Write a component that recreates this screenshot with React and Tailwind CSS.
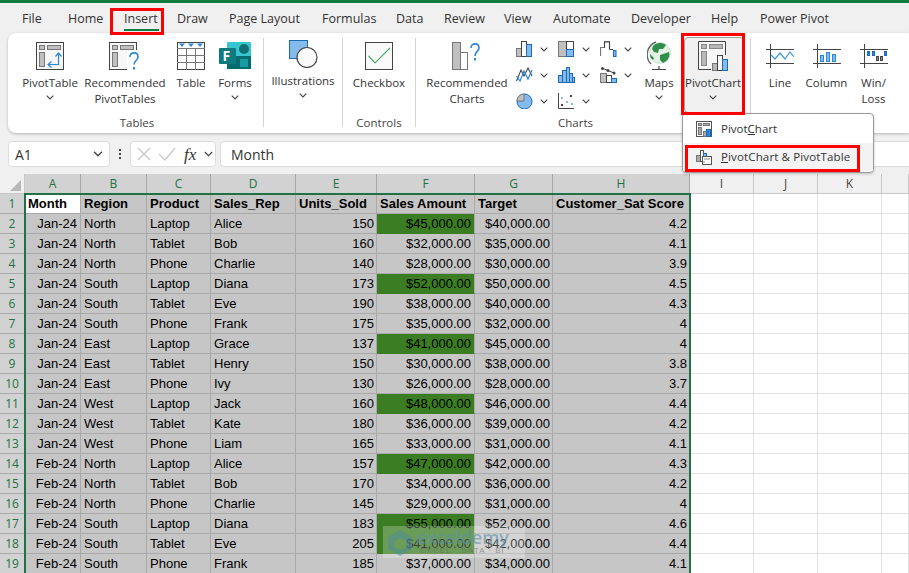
import React from "react"

const uiFont = "font-['Open_Sans','Noto_Sans',sans-serif]"

const tabs = [
  { label: "File", cls: "w-[46px]" },
  { label: "Home", cls: "w-[56px]" },
  { label: "Insert", cls: "w-[53px]" },
  { label: "Draw", cls: "w-[52px]" },
  { label: "Page Layout", cls: "w-[93px]" },
  { label: "Formulas", cls: "w-[74px]" },
  { label: "Data", cls: "w-[48px]" },
  { label: "Review", cls: "w-[60px]" },
  { label: "View", cls: "w-[49px]" },
  { label: "Automate", cls: "w-[78px]" },
  { label: "Developer", cls: "w-[80px]" },
  { label: "Help", cls: "w-[49px]" },
  { label: "Power Pivot", cls: "w-[100px]" },
]

const rows = [
  ["Jan-24", "North", "Laptop", "Alice", 150, "$45,000.00", "$40,000.00", "4.2", true],
  ["Jan-24", "North", "Tablet", "Bob", 160, "$32,000.00", "$35,000.00", "4.1"],
  ["Jan-24", "North", "Phone", "Charlie", 140, "$28,000.00", "$30,000.00", "3.9"],
  ["Jan-24", "South", "Laptop", "Diana", 173, "$52,000.00", "$50,000.00", "4.5", true],
  ["Jan-24", "South", "Tablet", "Eve", 190, "$38,000.00", "$40,000.00", "4.3"],
  ["Jan-24", "South", "Phone", "Frank", 175, "$35,000.00", "$32,000.00", "4"],
  ["Jan-24", "East", "Laptop", "Grace", 137, "$41,000.00", "$45,000.00", "4", true],
  ["Jan-24", "East", "Tablet", "Henry", 150, "$30,000.00", "$38,000.00", "3.8"],
  ["Jan-24", "East", "Phone", "Ivy", 130, "$26,000.00", "$28,000.00", "3.7"],
  ["Jan-24", "West", "Laptop", "Jack", 160, "$48,000.00", "$46,000.00", "4.4", true],
  ["Jan-24", "West", "Tablet", "Kate", 180, "$36,000.00", "$39,000.00", "4.2"],
  ["Jan-24", "West", "Phone", "Liam", 165, "$33,000.00", "$31,000.00", "4.1"],
  ["Feb-24", "North", "Laptop", "Alice", 157, "$47,000.00", "$42,000.00", "4.3", true],
  ["Feb-24", "North", "Tablet", "Bob", 170, "$34,000.00", "$36,000.00", "4.2"],
  ["Feb-24", "North", "Phone", "Charlie", 145, "$29,000.00", "$31,000.00", "4"],
  ["Feb-24", "South", "Laptop", "Diana", 183, "$55,000.00", "$52,000.00", "4.6", true],
  ["Feb-24", "South", "Tablet", "Eve", 205, "$41,000.00", "$42,000.00", "4.4", true],
  ["Feb-24", "South", "Phone", "Frank", 185, "$37,000.00", "$34,000.00", "4.1"],
]

const headers = ["Month", "Region", "Product", "Sales_Rep", "Units_Sold", "Sales Amount", "Target", "Customer_Sat Score"]
const cols = ["A", "B", "C", "D", "E", "F", "G", "H"]
const colWidths = ["w-[25px]", "w-[56px]", "w-[66px]", "w-[64px]", "w-[85px]", "w-[81px]", "w-[98px]", "w-[78px]", "w-[137px]", "w-[64px]", "w-[64px]", "w-[64px]", "w-[27px]"]

const Chevron = ({ className = "", w = 8, h = 5 }) => (
  <svg width={w} height={h} viewBox="0 0 8 5" className={`shrink-0 ${className}`}>
    <path d="M0.7 0.7 L4 4 L7.3 0.7" fill="none" stroke="#444" strokeWidth="1.1" />
  </svg>
)

const Icon = ({ w = 28, h = 28, children }) => (
  <svg width={w} height={h} viewBox={`0 0 ${w} ${h}`} className="block shrink-0">
    {children}
  </svg>
)

const Pivot = () => (
  <>
    <rect x="0.5" y="0.5" width="27" height="27" fill="#f7f7f7" stroke="#444" />
    <rect x="3.5" y="3.5" width="5" height="4" fill="#c0c0c0" stroke="#777" />
    <rect x="11.5" y="3.5" width="13" height="4" fill="#c0c0c0" stroke="#777" />
    <rect x="3.5" y="10.5" width="5" height="14" fill="#c0c0c0" stroke="#777" />
  </>
)

const PivotTableIcon = () => (
  <Icon>
    <Pivot />
    <path d="M12.5 22.5 H22.5 V12 M19.5 14.5 L22.5 11 L25.5 14.5 M15.5 19.5 L12 22.5 L15.5 25.5" fill="none" stroke="#2b88d8" strokeWidth="1.2" />
  </Icon>
)

const RecommendedPivotIcon = () => (
  <Icon w={32}>
    <Pivot />
    <rect x="18" y="8" width="14" height="20" fill="#fff" />
    <path d="M21 15 C21 9.5 29 9.5 29 15 C29 18.5 25 18.5 25 22.5" fill="none" stroke="#2b88d8" strokeWidth="1.6" />
    <rect x="24" y="25" width="2" height="2.5" fill="#2b88d8" />
  </Icon>
)

const TableIcon = () => (
  <Icon>
    <rect x="0.5" y="0.5" width="27" height="27" fill="#fff" stroke="#444" />
    <path d="M0 6.5 H28 M0 13.5 H28 M0 20.5 H28 M9.5 6 V28 M18.5 6 V28" stroke="#777" />
    <path d="M2 1.5 H8 L5 5 Z M11 1.5 H17 L14 5 Z M20 1.5 H26 L23 5 Z" fill="#2b88d8" />
  </Icon>
)

const FormsIcon = () => (
  <Icon w={32}>
    <rect x="8" y="0" width="24" height="27" rx="1" fill="#37c6d0" />
    <circle cx="25" cy="7" r="5" fill="#0f6f75" />
    <rect x="8" y="14" width="24" height="13" fill="#036c70" />
    <rect x="21" y="17" width="8" height="8" fill="#1a9ba1" />
    <rect x="0" y="6" width="17" height="16" rx="1" fill="#0e7a80" />
    <text x="3.5" y="19" fontSize="14" fontWeight="700" fill="#fff" fontFamily="'Open Sans',sans-serif">F</text>
  </Icon>
)

const IllustrationsIcon = () => (
  <Icon w={30}>
    <rect x="1.5" y="0.5" width="18" height="18" fill="#85bbec" stroke="#1a6ab8" />
    <circle cx="19" cy="17.5" r="10" fill="#f9f9f9" stroke="#444" strokeWidth="1.2" />
  </Icon>
)

const CheckboxIcon = () => (
  <Icon>
    <rect x="0.5" y="0.5" width="27" height="27" fill="#f9f9f9" stroke="#444" />
    <path d="M3.5 14 L10 21 L25 6" fill="none" stroke="#4fae6a" strokeWidth="1.2" />
  </Icon>
)

const RecommendedChartsIcon = () => (
  <Icon w={30}>
    <rect x="0.5" y="0.5" width="8" height="27" fill="#c0c0c0" stroke="#777" />
    <rect x="8.5" y="10.5" width="7" height="17" fill="#fff" stroke="#777" />
    <path d="M19 6 C19 0.5 27 0.5 27 6 C27 9.5 23 9.5 23 14" fill="none" stroke="#2b88d8" strokeWidth="1.6" />
    <rect x="22" y="16" width="2" height="2.5" fill="#2b88d8" />
  </Icon>
)

const smallCharts = [
  <>
    <rect x="0.5" y="7.5" width="5" height="8" fill="#c0c0c0" stroke="#777" />
    <rect x="5.5" y="0.5" width="5" height="15" fill="#fff" stroke="#444" />
    <rect x="10.5" y="3.5" width="5" height="12" fill="#85bbec" stroke="#1a6ab8" />
  </>,
  <>
    <rect x="0.5" y="0.5" width="8" height="15" fill="#c0c0c0" stroke="#777" />
    <rect x="8.5" y="0.5" width="7" height="8" fill="#fff" stroke="#444" />
    <rect x="8.5" y="8.5" width="7" height="7" fill="#85bbec" stroke="#1a6ab8" />
  </>,
  <>
    <path d="M0.5 15 V6.5 H4.5 V0.5 H9.5 V8" fill="none" stroke="#777" strokeWidth="1.2" />
    <path d="M4.5 7 V1 H9.5 V8.5 H13" fill="none" stroke="#444" />
    <rect x="13.5" y="9.5" width="2.5" height="6" fill="#85bbec" stroke="#1a6ab8" />
  </>,
  <>
    <path d="M0.5 14 L5 3 L8 9 L12 1 L16 9" fill="none" stroke="#444" strokeWidth="1.1" />
    <path d="M0.5 9 L4 14 L8 4 L12 12 L16 3" fill="none" stroke="#2b88d8" strokeWidth="1.2" />
  </>,
  <>
    <rect x="0.5" y="8.5" width="4" height="7" fill="#85bbec" stroke="#1a6ab8" />
    <rect x="4.5" y="3.5" width="4" height="12" fill="#85bbec" stroke="#1a6ab8" />
    <rect x="8.5" y="0.5" width="3" height="15" fill="#85bbec" stroke="#1a6ab8" />
    <rect x="11.5" y="6.5" width="3" height="9" fill="#85bbec" stroke="#1a6ab8" />
    <rect x="14.5" y="10.5" width="2" height="5" fill="#85bbec" stroke="#1a6ab8" />
  </>,
  <>
    <rect x="0.5" y="6.5" width="6" height="9" fill="#c0c0c0" stroke="#777" />
    <rect x="6.5" y="8.5" width="5" height="7" fill="#fff" stroke="#444" />
    <rect x="11.5" y="11.5" width="5" height="4" fill="#85bbec" stroke="#1a6ab8" />
    <path d="M2 1 L14 6" stroke="#444" />
    <circle cx="2.5" cy="1.5" r="1.5" fill="#444" />
    <circle cx="8" cy="3.5" r="1.5" fill="#444" />
    <circle cx="14" cy="6" r="1.5" fill="#444" />
  </>,
  <>
    <circle cx="8.5" cy="8.5" r="7.5" fill="#85bbec" stroke="#1a6ab8" />
    <path d="M8 1 V8 H1 C1 4 4 1 8 1 Z" fill="#c0c0c0" stroke="#777" />
  </>,
  <>
    <path d="M0.5 0 V15.5 H16" fill="none" stroke="#444" />
    <rect x="3" y="4" width="2" height="2" fill="#85bbec" />
    <rect x="3" y="11" width="2" height="2" fill="#444" />
    <rect x="8" y="8" width="2" height="2" fill="#85bbec" />
    <rect x="12" y="2" width="2" height="2" fill="#444" />
    <rect x="13" y="10" width="2" height="2" fill="#85bbec" />
  </>,
]

const MapsIcon = () => (
  <Icon w={24} h={30}>
    <path d="M9 1 A13.5 13.5 0 0 0 4 23" fill="none" stroke="#666" strokeWidth="1.4" />
    <circle cx="13" cy="12" r="10.5" fill="#e6f1e6" stroke="#bcd8c4" strokeWidth="0.6" />
    <path d="M6 5 C9 1.5 15 1 19 4 L16 8 L12 8 L11 12 L7 11 L5 8 Z M13 14 L22 11 C23.5 15 21 20 16 22 L13 19 Z M3 13 L7 17 L6 19 C4 18 3 16 3 13 Z" fill="#2f8f4a" />
    <path d="M12 25 V28 M5 28.5 H19" stroke="#444" strokeWidth="1.2" />
  </Icon>
)

const PivotChartIcon = () => (
  <Icon w={30} h={30}>
    <path d="M13 28.5 H0.5 V0.5 H27.5 V14" fill="#f7f7f7" stroke="#444" />
    <rect x="3.5" y="3.5" width="5" height="4" fill="#b8b8b8" stroke="#888" />
    <rect x="11.5" y="3.5" width="13" height="4" fill="#b8b8b8" stroke="#888" />
    <rect x="3.5" y="10.5" width="5" height="14" fill="#b8b8b8" stroke="#888" />
    <rect x="14.5" y="22.5" width="5" height="7" fill="#b8b8b8" stroke="#777" />
    <rect x="19.5" y="14.5" width="5" height="15" fill="#f7f7f7" stroke="#444" />
    <rect x="24.5" y="18.5" width="5" height="11" fill="#85bbec" stroke="#1a6ab8" />
  </Icon>
)

const LineIcon = () => (
  <Icon h={24}>
    <path d="M0 5.5 H28 M0 19.5 H28 M4.5 0 V24" stroke="#444" />
    <path d="M5 11 L9 15 L14 9 L19 15 L24 8 L28 13" fill="none" stroke="#3b9be0" strokeWidth="1.2" />
  </Icon>
)

const ColumnIcon = () => (
  <Icon h={24}>
    <path d="M0 5.5 H28 M0 19.5 H28 M4.5 0 V24" stroke="#444" />
    <rect x="7.5" y="11.5" width="3" height="6" fill="#85bbec" stroke="#2b88d8" />
    <rect x="13.5" y="8.5" width="3" height="9" fill="#85bbec" stroke="#2b88d8" />
    <rect x="19.5" y="10.5" width="3" height="7" fill="#85bbec" stroke="#2b88d8" />
  </Icon>
)

const WinLossIcon = () => (
  <Icon h={24}>
    <path d="M0 5.5 H28 M0 19.5 H28 M4.5 0 V24" stroke="#444" />
    <rect x="7.5" y="7.5" width="2" height="4" fill="#2b88d8" stroke="#1a6ab8" />
    <rect x="12.5" y="7.5" width="2" height="4" fill="#2b88d8" stroke="#1a6ab8" />
    <rect x="16.5" y="12.5" width="2" height="4" fill="#888" stroke="#444" />
    <rect x="20.5" y="12.5" width="2" height="4" fill="#888" stroke="#444" />
    <rect x="24.5" y="7.5" width="2" height="4" fill="#2b88d8" stroke="#1a6ab8" />
  </Icon>
)

const MenuPivotChartIcon = () => (
  <Icon w={16} h={16}>
    <rect x="0.5" y="0.5" width="15" height="15" fill="#fff" stroke="#555" />
    <rect x="2.5" y="2.5" width="3" height="2" fill="#aaa" stroke="#777" />
    <rect x="7.5" y="2.5" width="6" height="2" fill="#aaa" stroke="#777" />
    <rect x="2.5" y="6.5" width="3" height="7" fill="#aaa" stroke="#777" />
    <rect x="7.5" y="10.5" width="3" height="5" fill="#aaa" stroke="#777" />
    <rect x="10.5" y="8.5" width="4" height="7" fill="#2b88d8" stroke="#1a6ab8" />
  </Icon>
)

const MenuBothIcon = () => (
  <Icon w={16} h={16}>
    <rect x="0.5" y="6.5" width="4" height="6" fill="#aaa" stroke="#777" />
    <rect x="4.5" y="1.5" width="3" height="11" fill="#fff" stroke="#555" />
    <rect x="7.5" y="4.5" width="3" height="3" fill="#85bbec" stroke="#1a6ab8" />
    <rect x="6.5" y="7.5" width="9" height="8" fill="#fff" stroke="#555" />
    <path d="M8 10 H14 M8 12 V14" stroke="#888" />
  </Icon>
)

const RibbonButton = ({ icon, label, sub, chevron, className = "" }) => (
  <div className={`flex flex-col items-center pt-[9px] shrink-0 ${className}`}>
    <div className="h-[28px] flex items-center justify-center">{icon}</div>
    <div className="mt-[5px] text-center whitespace-nowrap leading-[16px]">{label}</div>
    {sub && <div className="text-center whitespace-nowrap leading-[16px]">{sub}</div>}
    {chevron && <Chevron className="mt-[4px]" />}
  </div>
)

const Group = ({ label, className = "", labelCls = "", children }) => (
  <div className={`flex flex-col shrink-0 h-full ${className}`}>
    <div className="flex h-[82px]">{children}</div>
    <div className={`text-center leading-[16px] text-[#444] ${labelCls}`}>{label}</div>
  </div>
)

const Divider = () => <div className="w-px h-[89px] mt-[5px] bg-[#d4d4d4] shrink-0" />

const Ribbon = () => (
  <div className="relative ml-2 h-[100px] flex bg-white rounded-l-lg shadow-[0_1px_3px_rgba(0,0,0,0.25)] text-[11.5px] text-[#333]">
    <Group label="Tables" className="w-[255px]" labelCls="pl-[3px]">
      <RibbonButton icon={<PivotTableIcon />} label="PivotTable" chevron className="w-[70px] ml-[7px]" />
      <RibbonButton icon={<RecommendedPivotIcon />} label="Recommended" sub="PivotTables" className="w-[80px]" />
      <RibbonButton icon={<TableIcon />} label="Table" className="w-[52px]" />
      <RibbonButton icon={<FormsIcon />} label="Forms" chevron className="w-[36px]" />
    </Group>
    <Divider />
    <Group label="" className="w-[78px]">
      <RibbonButton icon={<IllustrationsIcon />} label="Illustrations" chevron className="w-[78px] !pt-[7px]" />
    </Group>
    <Divider />
    <Group label="Controls" className="w-[72px]">
      <RibbonButton icon={<CheckboxIcon />} label="Checkbox" className="w-[72px]" />
    </Group>
    <Divider />
    <Group label="Charts" className="w-[334px]" labelCls="pr-[15px]">
      <RibbonButton icon={<RecommendedChartsIcon />} label="Recommended" sub="Charts" className="w-[82px] ml-[10px]" />
      <div className="grid grid-cols-3 auto-rows-[26px] w-[126px] ml-[8px] pt-[3px]">
        {smallCharts.map((c, i) => (
          <div key={i} className="flex items-center gap-[6px]">
            <Icon w={18} h={16}>{c}</Icon>
            <Chevron />
          </div>
        ))}
      </div>
      <RibbonButton icon={<MapsIcon />} label="Maps" chevron className="w-[34px]" />
      <div className="ml-[8px] mt-[4px] h-[76px] w-[60px]">
        <RibbonButton icon={<PivotChartIcon />} label="PivotChart" chevron className="w-[60px] h-[76px] !pt-[4px] pr-[2px] bg-[#f0f0f0] border border-[#a0a0a0] rounded" />
      </div>
    </Group>
    <Divider />
    <div className="flex pl-[6px]">
      <RibbonButton icon={<LineIcon />} label="Line" className="w-[46px]" />
      <RibbonButton icon={<ColumnIcon />} label="Column" className="w-[47px]" />
      <RibbonButton icon={<WinLossIcon />} label="Win/" sub="Loss" className="w-[47px]" />
    </div>
  </div>
)

const FormulaBar = () => (
  <div className="flex items-center h-[26px] mt-2 ml-2 text-[14px] text-[#333]">
    <div className="flex items-center justify-between w-[102px] h-full pl-[6px] pr-[6px] bg-white border border-[#dcdcdc] rounded">
      <span>A1</span>
      <Chevron w={10} h={6} />
    </div>
    <div className="w-[20px] flex flex-col items-center gap-[2px]">
      <span className="w-[2px] h-[2px] bg-[#444]" />
      <span className="w-[2px] h-[2px] bg-[#444]" />
      <span className="w-[2px] h-[2px] bg-[#444]" />
    </div>
    <div className="flex items-center w-[86px] h-full pl-[6px] bg-white border border-[#dcdcdc] rounded">
      <svg width="40" height="14" viewBox="0 0 40 14" className="shrink-0">
        <path d="M1 1 L13 13 M13 1 L1 13" stroke="#c8c8c8" strokeWidth="1.3" />
        <path d="M22 7 L28 13 L38 1" fill="none" stroke="#c8c8c8" strokeWidth="1.3" />
      </svg>
      <span className="ml-[7px] font-['Liberation_Serif',serif] italic text-[17px] leading-none text-[#333]">fx</span>
      <Chevron w={9} h={6} className="ml-[8px]" />
    </div>
    <div className="flex-1 h-full ml-1 flex items-center pl-[10px] bg-white border-y border-l border-[#dcdcdc] rounded-l">Month</div>
  </div>
)

const Sheet = () => {
  const cellBase = "h-[20px] p-0 border-r border-b border-[#a9a9a9] bg-[#c6c6c6] text-black font-normal text-left whitespace-nowrap overflow-hidden"
  const blank = "h-[20px] p-0 border-r border-b border-[#e1e1e1] bg-white"
  const rowHead = "h-[20px] p-0 border-r border-b border-[#a9a9a9] bg-[#d2d2d2] text-[#217346] text-[12px] font-normal text-center " + uiFont
  return (
    <div className="relative mt-[7px] font-['Liberation_Sans',Arial,sans-serif] text-[13px] leading-[18px]">
      <table className="table-fixed w-[909px] border-separate border-spacing-0">
        <colgroup>
          {colWidths.map((c, i) => <col key={i} className={c} />)}
        </colgroup>
        <thead>
          <tr>
            <th className="h-[20px] p-0 bg-[#f0f0f0] border-r border-b border-[#c8c8c8]">
              <div className="ml-auto mr-[3px] mt-[3px] w-0 h-0 border-l-[11px] border-l-transparent border-b-[11px] border-b-[#b8b8b8]" />
            </th>
            {cols.map(c => (
              <th key={c} className={`h-[20px] p-0 bg-[#d2d2d2] border-r border-b border-[#a9a9a9] text-[#217346] text-[12px] font-normal ${uiFont}`}>{c}</th>
            ))}
            {["I", "J", "K", ""].map(c => (
              <th key={c} className={`h-[20px] p-0 bg-[#f0f0f0] border-r border-b border-[#c8c8c8] text-[#444] text-[12px] font-normal ${uiFont}`}>{c}</th>
            ))}
          </tr>
        </thead>
        <tbody>
          <tr>
            <td className={rowHead}>1</td>
            {headers.map((h, i) => (
              <td key={h} className={`${cellBase} !font-bold pl-[3px] ${i === 0 ? "!bg-white" : ""}`}>{h}</td>
            ))}
            <td className={blank} /><td className={blank} /><td className={blank} /><td className={blank} />
          </tr>
          {rows.map((r, i) => (
            <tr key={i}>
              <td className={rowHead}>{i + 2}</td>
              <td className={`${cellBase} !text-right pr-[3px]`}>{r[0]}</td>
              <td className={`${cellBase} pl-[3px]`}>{r[1]}</td>
              <td className={`${cellBase} pl-[3px]`}>{r[2]}</td>
              <td className={`${cellBase} pl-[3px]`}>{r[3]}</td>
              <td className={`${cellBase} !text-right pr-[2px]`}>{r[4]}</td>
              <td className={`${cellBase} !text-right pr-[3px] ${r[8] ? "!bg-[#3a7d22] !border-b-[#3a7d22]" : ""}`}>{r[5]}</td>
              <td className={`${cellBase} !text-right pr-[2px]`}>{r[6]}</td>
              <td className={`${cellBase} !text-right pr-[2px]`}>{r[7]}</td>
              <td className={blank} /><td className={blank} /><td className={blank} /><td className={blank} />
            </tr>
          ))}
        </tbody>
      </table>
      {/* selection outline over A1:H */}
      <div className="absolute left-[24px] top-[19px] w-[667px] h-[400px] border-2 border-[#1f7246] pointer-events-none" />
      {/* watermark */}
      <div className="absolute left-[383px] top-[352px] w-[142px] h-[32px] bg-white/25 flex items-center pl-[2px]">
        <svg width="30" height="30" viewBox="0 0 30 30" className="shrink-0 opacity-50">
          <path d="M15 3 L27 10 V22 L15 29 L3 22 V10 Z M15 11 L9 14 V20 L15 23 L21 20 V14 Z" fill="#4d8c9c" fillRule="evenodd" />
        </svg>
        <div className="ml-[1px] text-center whitespace-nowrap">
          <div className="font-['Open_Sans',sans-serif] text-[18px] leading-[18px] font-semibold text-[#5d8fa8]/60">exceldemy</div>
          <div className="text-[8px] leading-[10px] tracking-[1px] text-[#666]/60">EXCEL · DATA · BI</div>
        </div>
      </div>
    </div>
  )
}

const App = () => {
  return (
    <div className={`relative w-[909px] h-[573px] overflow-hidden bg-[#f0f0f0] ${uiFont}`}>
      <div className="h-[3px] bg-[#107c41]" />
      <div className="flex items-center h-[30px] pl-[22px] pt-[2px] text-[12.5px] text-[#333]">
        {tabs.map(t => (
          <div key={t.label} className={`${t.cls} relative shrink-0 whitespace-nowrap leading-[28px]`}>
            {t.label}
            {t.label === "Insert" && <span className="absolute left-0 right-[18px] bottom-[2px] h-[2px] bg-[#107c41]" />}
          </div>
        ))}
      </div>
      <Ribbon />
      <FormulaBar />
      <Sheet />

      {/* PivotChart dropdown */}
      <div className="absolute left-[682px] top-[113px] w-[192px] h-[60px] pt-[1px] bg-white border border-[#9a9a9a] rounded shadow-[0_1px_3px_rgba(0,0,0,0.2)] text-[11.5px] text-[#333]">
        <div className="flex items-center h-[28px] pl-[13px] gap-[9px]">
          <MenuPivotChartIcon />
          <span>Pivot<u>C</u>hart</span>
        </div>
        <div className="flex items-center h-[28px] pl-[13px] gap-[9px] bg-[#f3f3f3]">
          <MenuBothIcon />
          <span className="tracking-[0.14px]"><u>P</u>ivotChart &amp; PivotTable</span>
        </div>
      </div>

      {/* red callouts */}
      <div className="absolute left-[110px] top-[8px] w-[54px] h-[27px] border-[3px] border-[#f00]" />
      <div className="absolute left-[681px] top-[33px] w-[64px] h-[82px] border-[3px] border-[#f00]" />
      <div className="absolute left-[685px] top-[145px] w-[175px] h-[27px] border-[3px] border-[#f00]" />
    </div>
  )
}

export default App
